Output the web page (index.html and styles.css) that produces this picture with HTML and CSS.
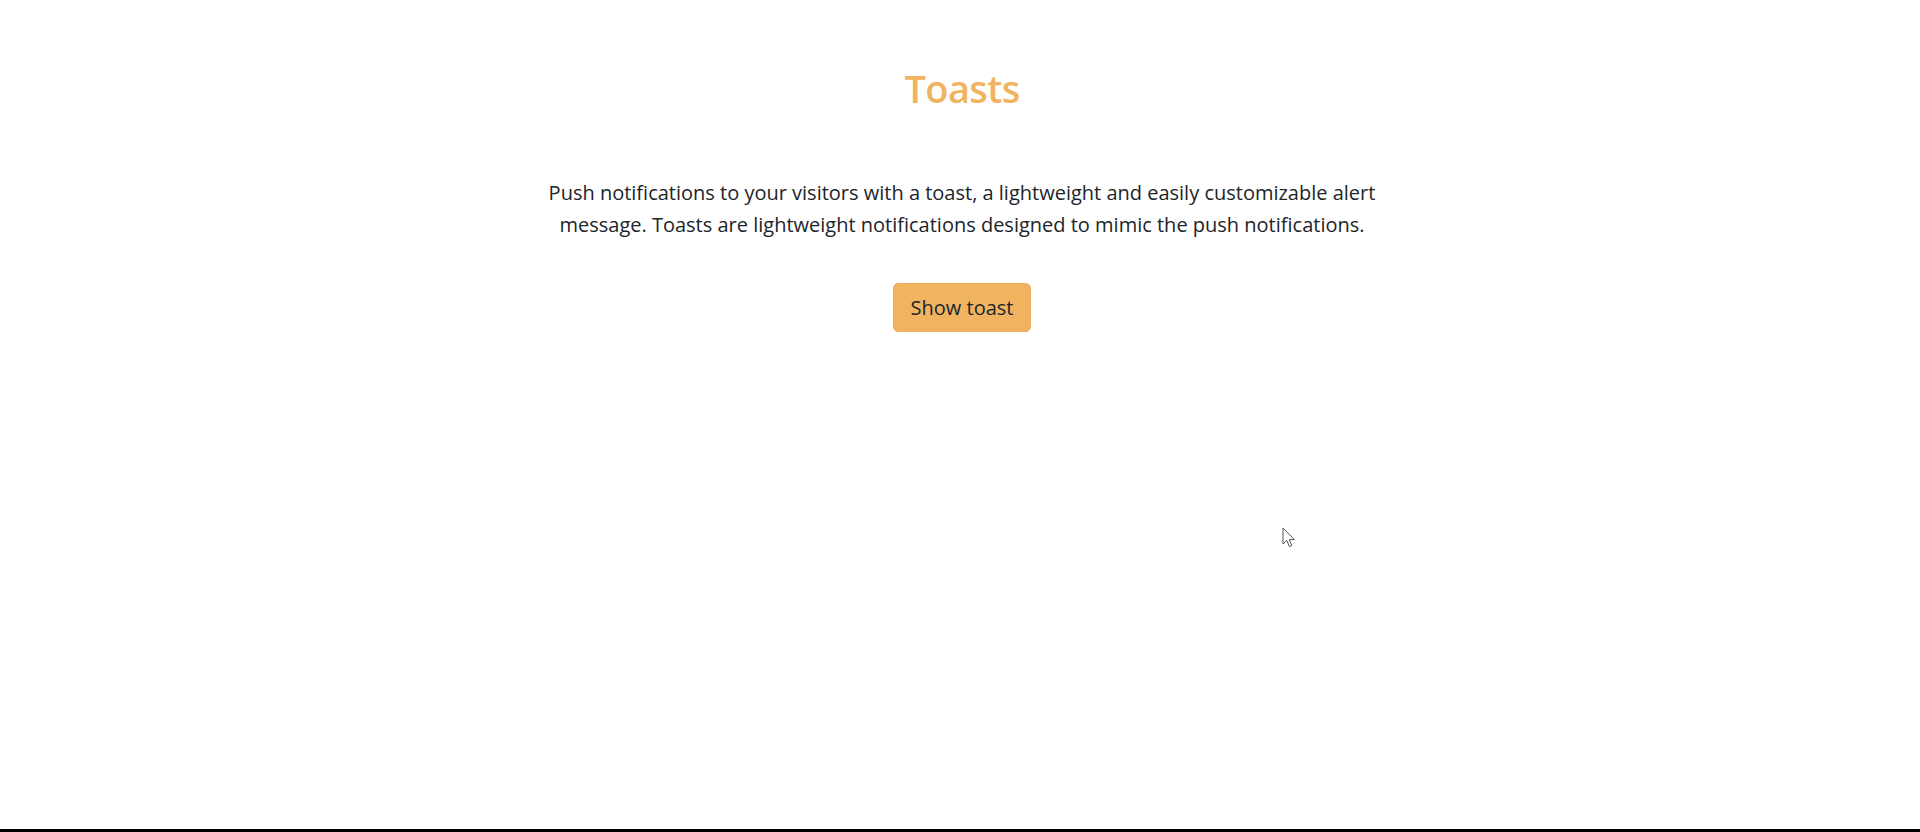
FILE: index.html
```html
<!DOCTYPE html>
<html lang="en">
<head>
<meta charset="utf-8">
<title>Toasts</title>
<link rel="stylesheet" href="styles.css">
</head>
<body>
<main class="page">
  <section class="hero">
    <h1 class="title">Toasts</h1>
    <p class="lead">Push notifications to your visitors with a toast, a lightweight and easily customizable alert<br>message. Toasts are lightweight notifications designed to mimic the push notifications.</p>
    <button class="btn-toast" type="button">Show toast</button>
  </section>
</main>
<div class="bottom-bar"></div>
<svg class="cursor" width="14" height="22" viewBox="0 0 14 22" aria-hidden="true">
  <path d="M1 1 L1 17 L4.8 13.4 L7.4 19.6 L9.8 18.6 L7.3 12.6 L12.4 12.6 Z" fill="#ffffff" stroke="#555" stroke-width="1" stroke-linejoin="round"/>
</svg>
</body>
</html>
```

FILE: styles.css
```css
html, body {
  margin: 0;
  padding: 0;
  height: 100%;
}

body {
  display: flex;
  flex-direction: column;
  background: #ffffff;
  color: #212529;
  font-family: "Open Sans", "Noto Sans", "Liberation Sans", sans-serif;
}

.page {
  flex: 1;
}

.hero {
  display: flex;
  flex-direction: column;
  align-items: center;
  text-align: center;
  padding: 64px 0 0 4px;
}

.title {
  margin: 0;
  font-size: 38px;
  line-height: 48px;
  font-weight: 600;
  letter-spacing: -0.6px;
  color: #f0b461;
}

.lead {
  margin: 65px 0 0;
  font-size: 20px;
  line-height: 32px;
  font-weight: 400;
  color: #212529;
}

.btn-toast {
  margin-top: 42px;
  height: 49px;
  padding: 0 17px;
  font-family: inherit;
  font-size: 20px;
  line-height: 30px;
  color: #212529;
  background: #f0b461;
  border: 1px solid #eeb05c;
  border-radius: 5px;
  cursor: pointer;
}

.bottom-bar {
  height: 3px;
  background: #000000;
}

.cursor {
  position: absolute;
  left: 1282px;
  top: 527px;
}
```
